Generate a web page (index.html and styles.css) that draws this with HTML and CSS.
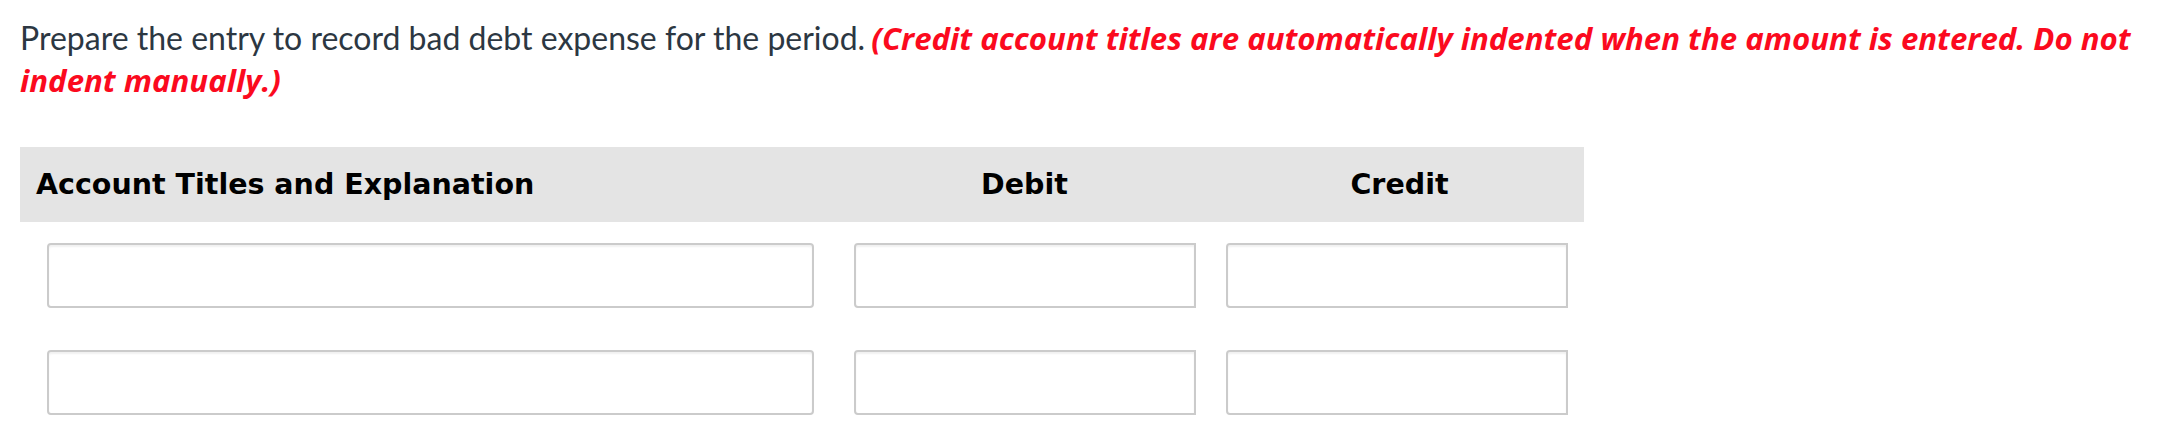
FILE: index.html
```html
<!DOCTYPE html>
<html lang="en">
<head>
<meta charset="utf-8">
<title>Journal entry</title>
<link rel="stylesheet" href="styles.css">
</head>
<body>
<div class="page">
  <p class="prompt">Prepare the entry to record bad debt expense for the period. <em class="note">(Credit account titles are automatically indented when the amount is entered. Do not indent manually.)</em></p>
  <div class="journal">
    <div class="row head">
      <div class="cell c-acct">Account Titles and Explanation</div>
      <div class="cell c-debit">Debit</div>
      <div class="cell c-credit">Credit</div>
    </div>
    <div class="row entry">
      <div class="cell c-acct"><input class="field field-acct" type="text"></div>
      <div class="cell c-debit"><input class="field field-amt field-debit" type="text"></div>
      <div class="cell c-credit"><input class="field field-amt field-credit" type="text"></div>
    </div>
    <div class="row entry">
      <div class="cell c-acct"><input class="field field-acct" type="text"></div>
      <div class="cell c-debit"><input class="field field-amt field-debit" type="text"></div>
      <div class="cell c-credit"><input class="field field-amt field-credit" type="text"></div>
    </div>
  </div>
</div>
</body>
</html>
```

FILE: styles.css
```css
html, body {
  margin: 0;
  padding: 0;
  background: #ffffff;
}

.page {
  padding: 17px 10px 0 20px;
  font-family: Lato, "Liberation Sans", sans-serif;
}

.prompt {
  margin: 0;
  font-size: 32px;
  line-height: 42px;
  color: #2c3742;
}

.note {
  margin-left: -2px;
  font-family: "Open Sans", Lato, sans-serif;
  font-size: 31.2px;
  font-style: italic;
  font-weight: 700;
  color: #fb0a1e;
}

.journal {
  margin-top: 46px;
  width: 1564px;
  display: flex;
  flex-direction: column;
  gap: 21px;
}

.row {
  display: grid;
  grid-template-columns: 814px 381px 369px;
}

.head {
  height: 75px;
  background: #e4e4e4;
  align-items: center;
  font-family: "DejaVu Sans", sans-serif;
  font-weight: 700;
  font-size: 28.5px;
  color: #000000;
}

.head .c-acct {
  padding-left: 16px;
}

.head .c-debit,
.head .c-credit {
  text-align: center;
}

.entry + .entry {
  margin-top: 21px;
}

.entry .c-acct {
  padding-left: 27px;
}

.entry .c-debit {
  padding-left: 20px;
}

.entry .c-credit {
  padding-left: 11px;
}

.field {
  display: block;
  box-sizing: border-box;
  height: 65px;
  margin: 0;
  padding: 0 10px;
  border: 2px solid #cbcbcb;
  background: #ffffff;
  box-shadow: inset 0 2px 2px rgba(0, 0, 0, 0.06);
  font-family: Lato, sans-serif;
  font-size: 24px;
  outline: none;
}

.field-acct {
  width: 767px;
  border-radius: 4px;
}

.field-amt {
  width: 342px;
  border-radius: 4px 0 0 4px;
}
```
